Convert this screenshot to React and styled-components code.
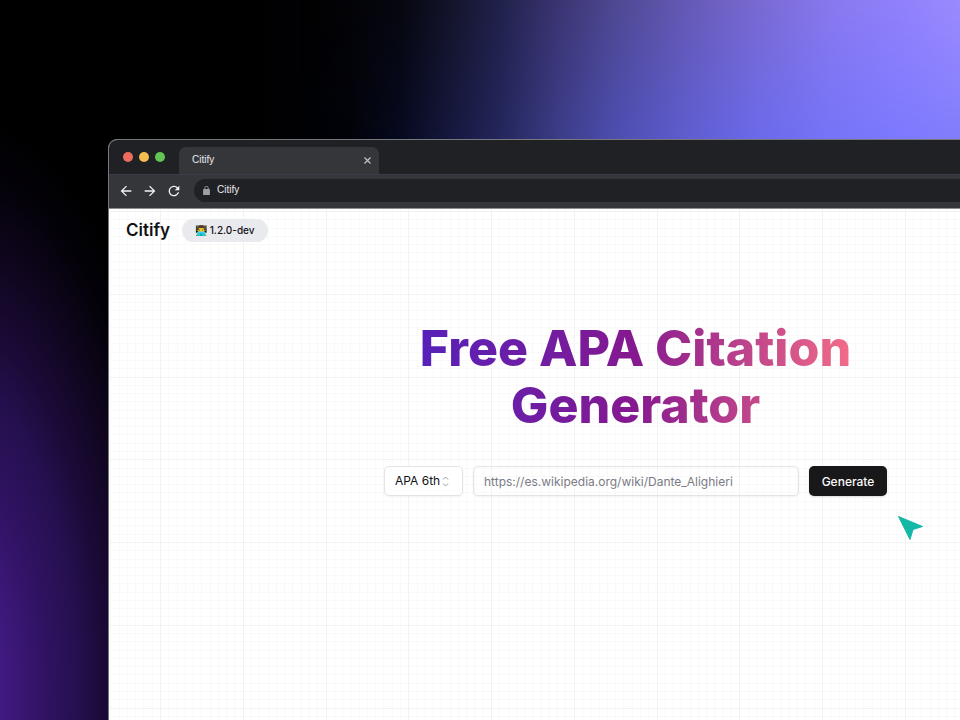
import React from "react";
import styled, { createGlobalStyle } from "styled-components";

const GlobalStyle = createGlobalStyle`
  *, *::before, *::after { box-sizing: border-box; }
  html, body, #root { height: 100%; }
  body { margin: 0; background: #000; overflow: hidden; }
  button, input, select { font: inherit; }
`;

const GRID_TILE = 331;
const gridLines = (direction, count, color) => {
  const stops = Array.from({ length: count }, (_, i) => {
    const at = Math.round((i * GRID_TILE) / count);
    const end = Math.round(((i + 1) * GRID_TILE) / count);
    return `${color} ${at}px ${at + 1}px, transparent ${at + 1}px ${end}px`;
  });
  return `linear-gradient(${direction}, ${stops.join(", ")})`;
};

const Backdrop = styled.div`
  position: relative;
  isolation: isolate;
  height: 100%;
  display: grid;
  padding: 139px 0 0 108px;
  overflow: hidden;
  background:
    radial-gradient(ellipse 230px 580px at -40px 690px, #441b88, #421a83 17%, #2f1261 38%, #24104e 52%, #1b0a38 62%, #10061f 76%, rgba(5, 2, 12, 0.8) 89%, transparent),
    linear-gradient(to right, #000 250px, #02030a 350px, #070a20 400px, #24265c 500px, #3c3c88 557px, #4d4db0 614px, #5f5dd0 686px, #6c6aeb 757px, #7674f8 830px, #7d79ff 900px, #827efb 960px);
  &::before {
    content: "";
    position: absolute;
    z-index: -1;
    inset: 0 0 auto 300px;
    height: 140px;
    background: linear-gradient(to right, #000 0, #06070f 100px, #15162d 157px, #20214b 200px, #3a3470 257px, #4d4890 314px, #6459b4 386px, #7869d0 457px, #8878ee 530px, #9081fb 600px, #9a8aff 660px);
    mask-image: linear-gradient(to bottom, #000, transparent);
  }
`;

const Window = styled.main`
  display: flex;
  flex-direction: column;
  min-width: 0;
  background: #fff;
  border: 1px solid #77787c;
  border-width: 1px 0 0 1px;
  border-radius: 9px 0 0 0;
  overflow: hidden;
`;

const TabStrip = styled.header`
  display: flex;
  align-items: flex-end;
  gap: 14px;
  height: 35px;
  padding-left: 14px;
  background: #202124;
  border-bottom: 1px solid #3b3b4c;
`;

const TrafficLights = styled.div`
  display: flex;
  gap: 6px;
  height: 34px;
  align-items: center;
`;

const Light = styled.span`
  width: 10px;
  height: 10px;
  border-radius: 50%;
  background: ${(p) => p.$color};
`;

const Tab = styled.div`
  display: flex;
  align-items: center;
  justify-content: space-between;
  width: 200px;
  height: 27px;
  padding: 0 7px 1px 13px;
  border-radius: 7px 7px 0 0;
  background: #35363a;
  color: #e8eaed;
  font: 10px/14px "Liberation Sans", Arial, sans-serif;
`;

const IconButton = styled.button`
  display: grid;
  place-items: center;
  padding: 0;
  border: 0;
  background: none;
  color: ${(p) => p.$color || "#f1f3f4"};
`;

const Toolbar = styled.nav`
  display: flex;
  align-items: center;
  gap: 12px;
  height: 34px;
  padding: 0 0 2px 11px;
  background: #35363a;
  border-bottom: 1px solid #8d8e94;
`;

const AddressBar = styled.label`
  display: flex;
  flex: 1;
  align-items: center;
  gap: 7px;
  height: 23px;
  margin-left: 2px;
  padding-left: 9px;
  border-radius: 12px 0 0 12px;
  background: #202124;
  color: #9aa0a6;
`;

const AddressInput = styled.input`
  flex: 1;
  min-width: 0;
  height: 20px;
  padding: 0 0 2px;
  border: 0;
  outline: 0;
  background: none;
  color: #e8eaed;
  font: 10px/14px "Liberation Sans", Arial, sans-serif;
`;

const Page = styled.div`
  flex: 1;
  font-family: Inter, sans-serif;
  color: #111114;
  background:
    ${gridLines("to right", 4, "#f2f2f3")} 51px 2px / ${GRID_TILE}px ${GRID_TILE}px,
    ${gridLines("to bottom", 4, "#f2f2f3")} 51px 2px / ${GRID_TILE}px ${GRID_TILE}px,
    ${gridLines("to right", 40, "#f9f9f9")} 51px 2px / ${GRID_TILE}px ${GRID_TILE}px,
    ${gridLines("to bottom", 40, "#f9f9f9")} 51px 2px / ${GRID_TILE}px ${GRID_TILE}px,
    #fff;
`;

const PageHeader = styled.div`
  display: flex;
  align-items: center;
  gap: 12px;
  padding: 10px 17px 0;
`;

const Brand = styled.a`
  color: #111114;
  font-size: 17px;
  font-weight: 600;
  line-height: 23px;
  text-decoration: none;
`;

const Version = styled.span`
  height: 23px;
  padding: 0 13px;
  border-radius: 12px;
  background: #e9eaee;
  font-size: 10px;
  font-weight: 500;
  line-height: 23px;
`;

const Hero = styled.section`
  display: flex;
  flex-direction: column;
  align-items: center;
  margin-right: -202px;
  padding-top: 78px;
`;

const Title = styled.h1`
  width: 440px;
  margin: 0;
  color: transparent;
  background: linear-gradient(to right, #5521ba, #86198f 50%, #f56e88);
  background-clip: text;
  font-size: 50px;
  font-weight: 800;
  line-height: 57px;
  text-align: center;
`;

const CitationForm = styled.form`
  display: flex;
  gap: 10px;
  margin-top: 32px;
  font-size: 12px;
`;

const SelectBox = styled.label`
  display: grid;
  grid-template-columns: 1fr;
  align-items: center;
  width: 79px;
  height: 30px;
  border: 1px solid #e4e4e7;
  border-radius: 5px;
  background: #fff;
  box-shadow: 0 1px 2px rgba(0, 0, 0, 0.05);
  > * { grid-area: 1 / 1; }
  > svg { justify-self: end; margin-right: 13px; pointer-events: none; }
`;

const StyleSelect = styled.select`
  appearance: none;
  height: 28px;
  padding: 0 0 1px 10px;
  border: 0;
  background: none;
  color: #111114;
`;

const UrlInput = styled.input`
  width: 326px;
  height: 30px;
  padding: 1px 10px 0;
  border: 1px solid #e4e4e7;
  border-radius: 5px;
  background: transparent;
  box-shadow: 0 1px 2px rgba(0, 0, 0, 0.05);
  &::placeholder { color: #7b7b84; opacity: 1; }
`;

const GenerateButton = styled.button`
  width: 78px;
  height: 30px;
  padding: 0;
  border: 0;
  border-radius: 5px;
  background: #18181b;
  color: #fafafa;
  font-weight: 500;
  box-shadow: 0 1px 2px rgba(0, 0, 0, 0.15);
`;

const Pointer = styled.svg`
  position: absolute;
  left: 897px;
  top: 515px;
`;

const Stroke = ({ size, width = 2, d }) => (
  <svg width={size} height={size} viewBox="0 0 24 24" fill="none" stroke="currentColor" strokeWidth={width} aria-hidden="true">
    <path d={d} />
  </svg>
);

const Filled = ({ width, height = width, viewBox = "0 0 24 24", d }) => (
  <svg width={width} height={height} viewBox={viewBox} fill="currentColor" aria-hidden="true">
    <path d={d} />
  </svg>
);

export default function App() {
  return (
    <Backdrop>
      <GlobalStyle />
      <Window>
        <TabStrip>
          <TrafficLights>
            <Light $color="#ed6a5e" />
            <Light $color="#f5bd4f" />
            <Light $color="#61c454" />
          </TrafficLights>
          <Tab>
            Citify
            <IconButton type="button" aria-label="Close tab" $color="#c4c7ca">
              <Stroke size={9} width={3} d="M4 4l16 16M20 4L4 20" />
            </IconButton>
          </Tab>
        </TabStrip>
        <Toolbar>
          <IconButton type="button" aria-label="Back">
            <Filled width={12} viewBox="3 3 18 18" d="M20 11H7.8l5.6-5.6L12 4l-8 8 8 8 1.4-1.4L7.8 13H20z" />
          </IconButton>
          <IconButton type="button" aria-label="Forward">
            <Filled width={12} viewBox="3 3 18 18" d="M4 13h12.2l-5.6 5.6L12 20l8-8-8-8-1.4 1.4 5.6 5.6H4z" />
          </IconButton>
          <IconButton type="button" aria-label="Reload">
            <Filled width={12} viewBox="3 3 18 18" d="M17.65 6.35A8 8 0 1 0 19.73 14h-2.08A6 6 0 1 1 12 6c1.66 0 3.14.69 4.22 1.78L13 11h7V4z" />
          </IconButton>
          <AddressBar>
            <Filled width={7} height={9} viewBox="4 1 16 21" d="M18 8h-1V6A5 5 0 0 0 7 6v2H6a2 2 0 0 0-2 2v10a2 2 0 0 0 2 2h12a2 2 0 0 0 2-2V10a2 2 0 0 0-2-2zM9 6a3 3 0 0 1 6 0v2H9z" />
            <AddressInput aria-label="Address" defaultValue="Citify" />
          </AddressBar>
        </Toolbar>
        <Page>
          <PageHeader>
            <Brand href="#">Citify</Brand>
            <Version>👨‍💻 1.2.0-dev</Version>
          </PageHeader>
          <Hero>
            <Title>Free APA Citation Generator</Title>
            <CitationForm>
              <SelectBox>
                <StyleSelect aria-label="Citation style">
                  <option>APA 6th</option>
                </StyleSelect>
                <svg width="7" height="11" viewBox="0 0 7 11" fill="none" stroke="#999" aria-hidden="true">
                  <path d="M1 3.5L3.5 1 6 3.5M1 7.5L3.5 10 6 7.5" />
                </svg>
              </SelectBox>
              <UrlInput type="url" aria-label="Source URL" placeholder="https://es.wikipedia.org/wiki/Dante_Alighieri" />
              <GenerateButton type="button">Generate</GenerateButton>
            </CitationForm>
          </Hero>
        </Page>
      </Window>
      <Pointer width="27" height="26" viewBox="0 0 27 26" aria-hidden="true">
        <path d="M1.5 1.5L25.5 11.5 16 14.5 13 24.5z" fill="#14b8a6" stroke="#14b8a6" strokeLinejoin="round" />
      </Pointer>
    </Backdrop>
  );
}
